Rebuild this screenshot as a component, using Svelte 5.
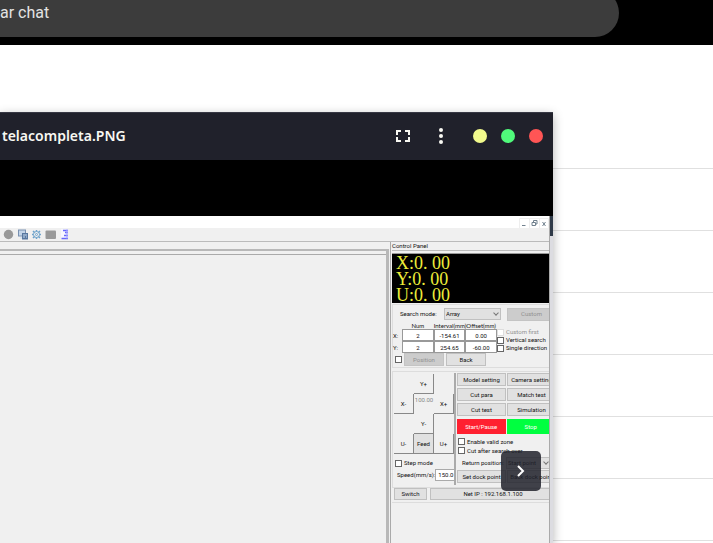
<script>
  const rows = Array.from({ length: 8 }, (_, i) => i);
  const axes = ['X', 'Y', 'U'];
  const grid = [
    { axis: 'X', num: '2', interval: '-154.61', offset: '0.00' },
    { axis: 'Y', num: '2', interval: '254.65', offset: '-60.00' }
  ];
  const actions = ['Model setting', 'Camera setting', 'Cut para', 'Match test', 'Cut test', 'Simulation'];
  const jog = ['', 'Y+', '', 'X-', '100.00', 'X+', '', 'Y-', '', 'U-', 'Feed', 'U+'];
</script>

<div class="page">
  <header class="top"><div class="search">ar chat</div></header>
  <main class="list">
    {#each rows as r (r)}<div class="row" class:first={r === 0}></div>{/each}
  </main>

  <section class="window">
    <div class="bar">
      <h1>telacompleta.PNG</h1>
      <button class="ico full" aria-label="Fullscreen">
        <svg width="14" height="12" viewBox="0 0 14 12" fill="none" stroke="#f8f8f2" stroke-width="2"><path d="M1 5V1H5M9 1H13V5M13 7V11H9M5 11H1V7" /></svg>
      </button>
      <button class="ico more" aria-label="Menu">
        <svg width="4" height="16" viewBox="0 0 4 16" fill="#f8f8f2"><circle cx="2" cy="2" r="2" /><circle cx="2" cy="8" r="2" /><circle cx="2" cy="14" r="2" /></svg>
      </button>
      <button class="dot yellow" aria-label="Minimize"></button>
      <button class="dot green" aria-label="Maximize"></button>
      <button class="dot red" aria-label="Close"></button>
    </div>
    <div class="gap"></div>
    <div class="photo">
      <div class="app">
        <div class="caption">
          <svg width="30" height="10" viewBox="0 0 30 10" fill="none" stroke="#71818e">
            <path d="M.5 10V.5H29.5V10M10.500 .5V10M20.500 .5V10" stroke="#eee" />
            <path d="M3 7.500H6.500M13 4.500H16.500V7.500H13ZM14.500 4V2.500H18V6H17M23.500 4L26.500 8M26.500 4L23.500 8" />
          </svg>
        </div>
        <div class="tools">
          <svg width="70" height="12" viewBox="0 0 70 12">
            <circle cx="8.500" cy="6.500" r="4.700" fill="#999" />
            <rect x="18.500" y="2" width="7" height="6" fill="#c3d4e8" stroke="#7890b0" />
            <rect x="22" y="5" width="6" height="6.500" fill="#58779f" />
            <path d="M23 7H27M23 9H25M26 9H27M20 10H22" stroke="#c5d9ee" />
            <g fill="none" stroke="#6fa3cb"><circle cx="36.500" cy="6.500" r="3" /><circle cx="36.500" cy="6.500" r="1" /><path d="M36.500 2V3.500M36.500 9.500V11M32 6.500H33.500M39.500 6.500H41M33 3L34.500 4.500M38.500 8.500L40 10M33 10L34.500 8.500M38.500 4.500L40 3" stroke-width="1.500" /></g>
            <rect x="45.500" y="2.500" width="10.500" height="8.500" rx="1" fill="#999" />
            <rect x="61" y="1" width="7" height="10" fill="#f7f7ff" />
            <path d="M63 2.500H68M65 4.500H68M64 7.500H68M61.500 10.500H68" stroke="#6768fa" stroke-width="1.500" /><path d="M67 1.500V10.500" stroke="#a9a9ff" stroke-width="2" stroke-opacity=".6" />
          </svg>
        </div>
        <div class="work">
          <div class="canvas-side"><div class="canvas"></div></div>
          <div class="panel">
            <h2>Control Panel</h2>
            <div class="readout">{#each axes as a (a)}<div>{a}:0. 00</div>{/each}</div>
            <div class="group searching">
              <div class="mode">
                <label for="mode">Search mode:</label>
                <span class="pick"><select id="mode"><option>Array</option></select></span>
                <button class="btn wide" disabled>Custom</button>
              </div>
              <div class="array">
                <table>
                  <thead><tr><th class="axis"></th><th>Num</th><th>Interval(mm)</th><th>Offset(mm)</th></tr></thead>
                  <tbody>
                    {#each grid as g (g.axis)}
                      <tr>
                        <th class="axis">{g.axis}:</th>
                        <td><input aria-label="{g.axis} number" value={g.num} /></td>
                        <td><input aria-label="{g.axis} interval" value={g.interval} /></td>
                        <td><input aria-label="{g.axis} offset" value={g.offset} /></td>
                      </tr>
                    {/each}
                  </tbody>
                </table>
                <div class="checks">
                  <label class="off"><input type="checkbox" disabled />Custom first</label>
                  <label><input type="checkbox" />Vertical search</label>
                  <label><input type="checkbox" />Single direction</label>
                </div>
              </div>
              <div class="posrow">
                <input type="checkbox" aria-label="Use position" />
                <button class="btn" disabled>Position</button>
                <button class="btn">Back</button>
              </div>
            </div>
            <div class="group moving">
              <div class="left">
                <div class="jog">
                  {#each jog as j, i (i)}
                    {#if j === '100.00'}<output>{j}</output>
                    {:else if j}<button class:feed={j === 'Feed'}>{j}</button>
                    {:else}<span></span>{/if}
                  {/each}
                </div>
                <label class="step"><input type="checkbox" />Step mode</label>
                <label class="speed">Speed(mm/s):<input value="150.0" /></label>
              </div>
              <div class="right">
                <div class="acts">
                  {#each actions as a (a)}<button class="btn wide">{a}</button>{/each}
                </div>
                <div class="run"><button class="start">Start/Pause</button><button class="stop">Stop</button></div>
                <label class="opt"><input type="checkbox" />Enable valid zone</label>
                <label class="opt"><input type="checkbox" />Cut after search over</label>
                <div class="ret">
                  <label for="ret">Return position:</label>
                  <span class="pick"><select id="ret"><option>Start point</option></select></span>
                </div>
                <div class="dock"><button class="btn wide">Set dock point</button><button class="btn wide">Back dock point</button></div>
              </div>
            </div>
            <div class="foot"><button class="btn">Switch</button><button class="btn net">Net IP : 192.168.1.100</button></div>
          </div>
        </div>
      </div>
      <div class="edge"><div></div></div>
    </div>
    <button class="next" aria-label="Next">
      <svg width="8" height="12" viewBox="0 0 8 12" fill="none" stroke="#fff" stroke-width="2"><path d="M1 1L6 6L1 11" /></svg>
    </button>
  </section>
</div>

<style>
  :global(body) { margin: 0; background: #fff; }
  * { box-sizing: border-box; }
  button, input, select { font: inherit; color: inherit; margin: 0; padding: 0; border: 0; border-radius: 0; }
  .page { position: relative; height: 100vh; overflow: hidden; background: #fff; }
  .top { height: 45px; background: #000; overflow: hidden; }
  .search { height: 48px; margin: -11px 94px 0 0; padding-top: 13px; border-radius: 0 24px 24px 0; background: #3c3c3c; color: #e3e3e3; font: 16px/22px Roboto, sans-serif; }
  .row { height: 62px; border-bottom: 1px solid #e0e0e0; }
  .row.first { border-color: transparent; }
  .window { position: absolute; top: 112px; left: 0; right: 160px; bottom: 0; display: flex; flex-direction: column; background: #000; box-shadow: 0 3px 10px rgba(0, 0, 0, .3); }
  .bar { height: 48px; flex: none; display: flex; align-items: center; padding: 0 10px 1px 2px; background: #20212b; border-top: 1px solid #373844; }
  h1 { flex: 1; margin: 0; color: #f8f8f2; font: 600 14px/20px "Noto Sans", sans-serif; }
  .ico { background: none; display: flex; }
  .full { margin-right: 29px; }
  .more { margin-right: 30px; }
  .dot { width: 14px; height: 14px; border-radius: 7px; }
  .dot + .dot { margin-left: 14px; }
  .yellow { background: #f1fa8c; }
  .green { background: #50fa7b; }
  .red { background: #ff5555; }
  .gap { height: 56px; flex: none; }
  .photo { flex: 1; min-height: 0; display: flex; }
  .app { flex: 1; min-width: 0; display: flex; flex-direction: column; background: #f0f0f0; color: #111; font: 6px/8px Roboto, Arial, sans-serif; }
  .edge { width: 4px; background: #dcdce1; border-left: 1px solid #aaa; }
  .edge div { height: 20px; background: #2f3a48; }
  .caption { height: 12px; flex: none; background: #fff; display: flex; justify-content: flex-end; align-items: flex-end; }
  .tools { height: 14px; flex: none; border-bottom: 1px solid #bbb; }
  .tools svg { display: block; }
  .work { flex: 1; min-height: 0; display: flex; }
  .canvas-side { flex: 1; padding-top: 7px; display: flex; }
  .canvas { flex: 1; border: solid #b8b8b8; border-width: 2px 3px 0 0; margin-right: 1px; }
  .canvas::before { content: ""; display: block; height: 3px; border-bottom: 1px solid #aaa; }
  .panel { width: 159px; overflow: hidden; border-left: 1px solid #aaa; padding-left: 1px; white-space: nowrap; }
  h2 { font: inherit; margin: 0 0 2px; height: 9px; border-bottom: 1px solid #bbb; }
  .readout { height: 50px; border-top: 1px solid #999; background: #000; color: #eded3a; font: 18px/16px "Liberation Serif", serif; padding: 1px 0 0 4px; }
  .btn { height: 13px; width: 40px; background: #e1e1e1; border: 1px solid #c0c0c0; text-align: center; flex: none; line-height: 10px; }
  .btn:disabled { background: #ccc; color: #909090; border-color: #c4c4c4; }
  .btn.wide { width: 49px; }
  .group { border: 1px solid #ddd; border-right: 0; }
  .searching { height: 64px; padding-top: 2px; margin-top: 1px; }
  .mode { display: flex; height: 14px; align-items: center; }
  .mode label { width: 51px; padding-left: 7px; flex: none; }
  .mode .pick { width: 57px; flex: none; margin-right: 6px; }
  .pick { position: relative; display: block; }
  .pick::after { content: ""; position: absolute; right: 3px; top: 3px; width: 3px; height: 3px; border: solid #777; border-width: 0 1px 1px 0; transform: rotate(45deg); }
  select { appearance: none; width: 100%; height: 12px; display: block; background: #e1e1e1; border: 1px solid #c0c0c0; padding-left: 1px; line-height: 10px; }
  .array { display: flex; height: 32px; }
  table { border-collapse: collapse; table-layout: fixed; width: 104px; flex: none; height: 32px; }
  th { font-weight: normal; padding: 0; height: 8px; line-height: 7px; }
  thead th { font-family: "Liberation Sans Narrow", Lato, sans-serif; }
  .axis { width: 9px; text-align: left; }
  td { padding: 0; height: 12px; }
  td input { display: block; width: 100%; height: 12px; background: #fff; border: 1px solid #999; text-align: center; }
  .checks { padding-top: 7px; display: flex; flex-direction: column; }
  .checks label { height: 8px; display: flex; align-items: center; gap: 2px; }
  input[type='checkbox'] { appearance: none; width: 7px; height: 7px; flex: none; background: #fff; border: 1px solid #666; }
  input[type='checkbox']:disabled { border-color: #ddd; }
  .off { color: #909090; }
  .posrow { display: flex; align-items: center; gap: 2px; padding-left: 2px; }
  .moving { display: flex; margin-top: 3px; padding-top: 1px; height: 117px; }
  .left { width: 61px; flex: none; }
  .jog { display: grid; grid-template-columns: repeat(3, 20px); grid-auto-rows: 20px; margin: 1px 0 0 1px; }
  .jog button { background: #f0f0f0; border: solid #888; border-width: 0 1px 1px 0; }
  .jog .feed { background: #e1e1e1; }
  .jog output { color: #888; text-align: center; line-height: 12px; }
  .step { display: flex; align-items: center; gap: 2px; height: 18px; padding-left: 2px; }
  .speed { display: flex; align-items: center; padding-left: 4px; height: 5px; justify-content: space-between; }
  .speed input { width: 21px; height: 12px; background: #fff; border: 1px solid #aaa; text-align: center; }
  .right { border-left: 2px solid #aaa; height: 112px; flex: none; width: 101px; }
  .acts { display: grid; grid-template-columns: 49px 49px; gap: 2px 1px; padding-left: 1px; }
  .run { display: flex; gap: 1px; padding: 3px 0 3px 1px; }
  .run button { width: 49px; height: 15px; color: #fff; }
  .start { background: #ff2030; }
  .stop { background: #00ff40; }
  .opt { display: flex; align-items: center; gap: 2px; height: 9px; padding-left: 2px; }
  .ret { display: flex; align-items: center; height: 15px; }
  .ret label { width: 50px; padding-left: 6px; flex: none; }
  .ret .pick { width: 45px; }
  .dock { display: flex; gap: 1px; padding-left: 1px; }
  .foot { display: flex; gap: 3px; padding-left: 2px; height: 15px; border-bottom: 1px solid #ddd; }
  .foot .btn { width: 33px; height: 12px; }
  .foot .net { width: 126px; }
  .next { position: absolute; right: 12px; top: 339px; width: 40px; height: 40px; border-radius: 5px; background: rgba(33, 34, 44, .85); display: flex; align-items: center; justify-content: center; }
</style>
